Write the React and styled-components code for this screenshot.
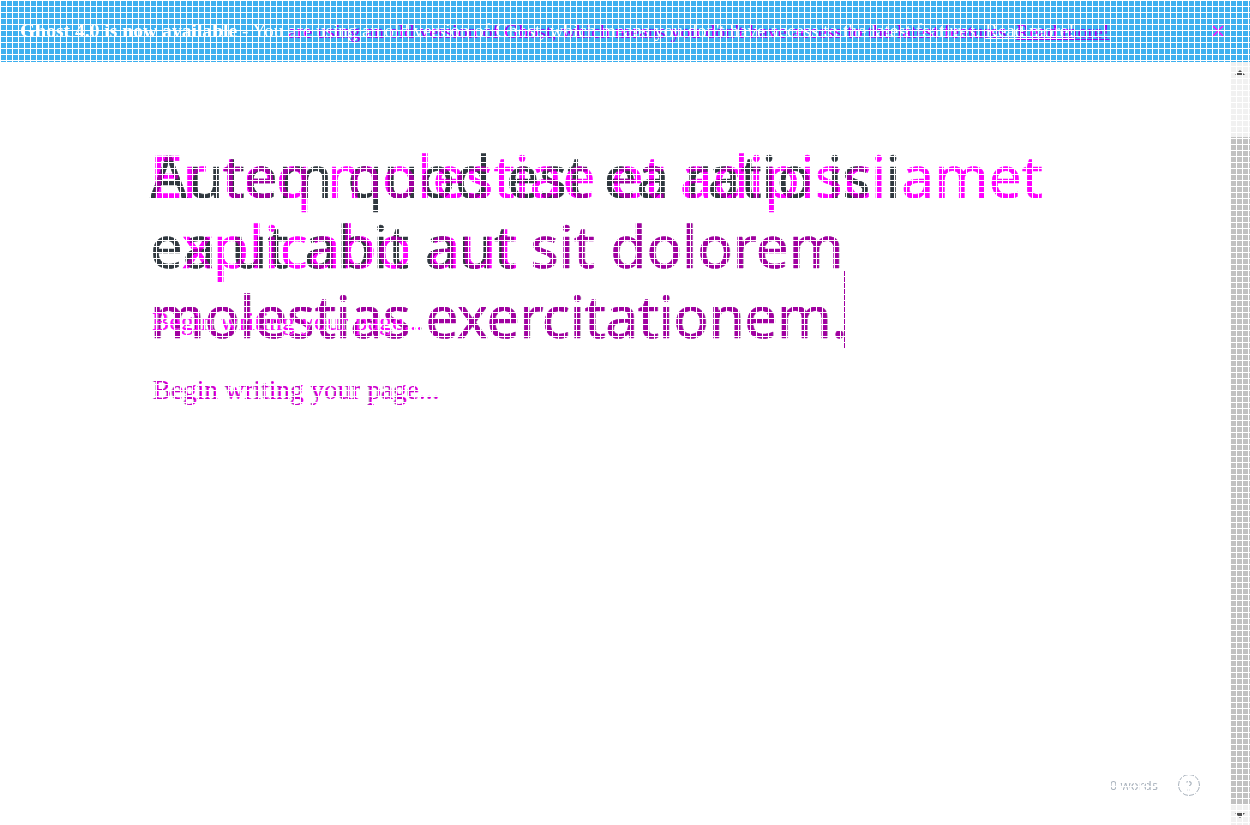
import React from "react";
import styled, { createGlobalStyle, css } from "styled-components";

const GlobalStyle = createGlobalStyle`
  html, body {
    margin: 0;
    padding: 0;
    height: 100%;
    overflow: hidden;
    background: #fff;
  }
  #root { height: 100%; }
`;

// magenta text goes down twice: multiply to kill the green, lighten to lift what sits on dark text
const blended = css`
  ${(p) => p.$tone === "multiply" && "color: #ff00ff; -webkit-text-stroke-color: #ff00ff; mix-blend-mode: multiply;"}
  ${(p) => p.$tone === "lighten" && "color: #a000a0; -webkit-text-stroke-color: #a000a0; mix-blend-mode: lighten;"}
`;

const Page = styled.div`
  display: flex;
  flex-direction: column;
  height: 825px;
  width: 1250px;
`;

const Banner = styled.div`
  display: grid;
  grid-template-columns: 1fr 24px;
  align-items: center;
  height: 62px;
  padding: 0 20px;
  box-sizing: border-box;
  background: #3eb0ef;
  color: #fff;
  font-family: "Liberation Serif", serif;
  font-size: 19.6px;
`;

const BannerText = styled.div`
  grid-area: 1 / 1;
  white-space: nowrap;
  ${blended}
`;

const Notice = styled.span`
  font-size: ${(p) => (p.$wide ? 19.85 : 19)}px;
`;

const Hidden = styled.span`
  visibility: hidden;
`;

const ReadMore = styled.span`
  text-decoration: underline;
`;

const CloseIcon = styled.svg`
  grid-area: 1 / 2;
  width: 12px;
  height: 12px;
  justify-self: center;
  stroke: ${(p) => p.$stroke};
  stroke-width: 1.5;
  ${(p) => p.$blend && `mix-blend-mode: ${p.$blend};`}
`;

const Body = styled.div`
  flex: 1;
  display: flex;
  min-height: 0;
`;

const Editor = styled.main`
  flex: 1;
  display: flex;
  flex-direction: column;
  padding: 78px 30px 29px 150px;
`;

const Stack = styled.div`
  display: grid;
  width: 1000px;
`;

const Title = styled.div`
  grid-area: 1 / 1;
  font-family: "Noto Sans", sans-serif;
  font-size: 58.5px;
  line-height: 70px;
  white-space: pre;
  color: #30383f;
  -webkit-text-stroke: 0.5px #30383f;
  ${blended}
`;

const TitleLine = styled.div`
  letter-spacing: ${(p) => p.$spacing || 0}px;
`;

// words that both texts share come out as one flat purple with a grey edge
const Shared = styled.span`
  color: #a000a0;
  -webkit-text-stroke: 0.5px #a000a0;
  text-shadow: 1px 0 #c8c8c8;
`;

const Caret = styled.div`
  grid-area: 1 / 1;
  justify-self: start;
  align-self: start;
  width: 1px;
  height: 78px;
  margin: 131px 0 0 694px;
  background: #a000a0;
`;

const Placeholder = styled.div`
  grid-area: 1 / 1;
  font-family: "Liberation Serif", serif;
  font-size: ${(p) => (p.$small ? 25.8 : 27.3)}px;
  line-height: 30px;
  margin-top: ${(p) => (p.$small ? 167 : 235)}px;
  margin-left: ${(p) => (p.$shift ? 3 : 2)}px;
  white-space: nowrap;
  color: ${(p) => p.$color || "#c5c5c5"};
  ${blended}
`;

const Status = styled.footer`
  margin-top: auto;
  display: flex;
  align-items: center;
  justify-content: flex-end;
  gap: 20px;
  color: #abb4be;
  font-family: "Noto Sans", sans-serif;
  font-size: 13px;
`;

const HelpIcon = styled.div`
  width: 20px;
  height: 20px;
  border: 1px solid #abb4be;
  border-radius: 50%;
  display: flex;
  align-items: center;
  justify-content: center;
  font-size: 14px;
`;

const Scrollbar = styled.div`
  width: 20px;
  display: flex;
  flex-direction: column;
  background: #f1f1f1;
`;

const ArrowBox = styled.div`
  height: ${(p) => p.$height}px;
  display: flex;
  align-items: center;
  justify-content: center;
`;

const Arrow = styled.div`
  width: 0;
  height: 0;
  border-left: 5px solid transparent;
  border-right: 5px solid transparent;
  ${(p) => (p.$down ? "border-top: 5px solid #505050;" : "border-bottom: 5px solid #505050;")}
`;

const Thumb = styled.div`
  flex: 1;
  background: #c1c1c1;
`;

const GridOverlay = styled.div`
  position: fixed;
  inset: 0;
  pointer-events: none;
  background-image:
    repeating-linear-gradient(to right, #fff 0 1px, transparent 1px 6px),
    repeating-linear-gradient(to bottom, #fff 0 1px, transparent 1px 6px);
`;

const NOTICE_START = "- You ";
const NOTICE_END = "are using an old version of Ghost, which means you don't have access to the latest features. ";
const PLACEHOLDER = "Begin writing your page...";

export default function App() {
  return (
    <>
      <GlobalStyle />
      <Page>
        <Banner>
          <BannerText>
            <b>Ghost 4.0 is now available</b> <Notice>{NOTICE_START}{NOTICE_END}<ReadMore>Read more!</ReadMore></Notice>
          </BannerText>
          {["multiply", "lighten"].map((tone) => (
            <BannerText key={tone} $tone={tone}>
              <Hidden><b>Ghost 4.0 is now available</b> <Notice>{NOTICE_START}</Notice></Hidden>
              <Notice $wide>{NOTICE_END}<ReadMore>Read more!</ReadMore></Notice>
            </BannerText>
          ))}
          <CloseIcon viewBox="0 0 12 12" $stroke="#fff"><path d="M1 1l10 10M11 1L1 11" /></CloseIcon>
          <CloseIcon viewBox="0 0 12 12" $stroke="#ff00ff" $blend="multiply"><path d="M1 1l10 10M11 1L1 11" /></CloseIcon>
        </Banner>
        <Body>
          <Editor>
            <Stack>
              <Title>
                <TitleLine>Autem quod est ea ratio is i</TitleLine>
                <TitleLine $spacing={0.1}>ea ut abit aut <Shared>sit dolorem</Shared></TitleLine>
                <TitleLine $spacing={-0.3}><Shared>molestias exercitationem.</Shared></TitleLine>
              </Title>
              <Placeholder>{PLACEHOLDER}</Placeholder>
              {["multiply", "lighten"].map((tone) => (
                <React.Fragment key={tone}>
                  <Title $tone={tone}>
                    <TitleLine>Er teq molestiae et adipisci amet</TitleLine>
                    <TitleLine $spacing={0.1}><Hidden>e</Hidden>xplicabo aut</TitleLine>
                  </Title>
                  <Placeholder $tone={tone} $shift>{PLACEHOLDER}</Placeholder>
                </React.Fragment>
              ))}
              <Placeholder $small $shift $color="#c5c5c5">{PLACEHOLDER}</Placeholder>
              <Placeholder $small $color="#ff00ff">{PLACEHOLDER}</Placeholder>
              <Caret />
            </Stack>
            <Status>
              <span>0 words</span>
              <HelpIcon>?</HelpIcon>
            </Status>
          </Editor>
          <Scrollbar>
            <ArrowBox $height={20}><Arrow /></ArrowBox>
            <ArrowBox $height={55} />
            <Thumb />
            <ArrowBox $height={20}><Arrow $down /></ArrowBox>
          </Scrollbar>
        </Body>
      </Page>
      <GridOverlay />
    </>
  );
}
